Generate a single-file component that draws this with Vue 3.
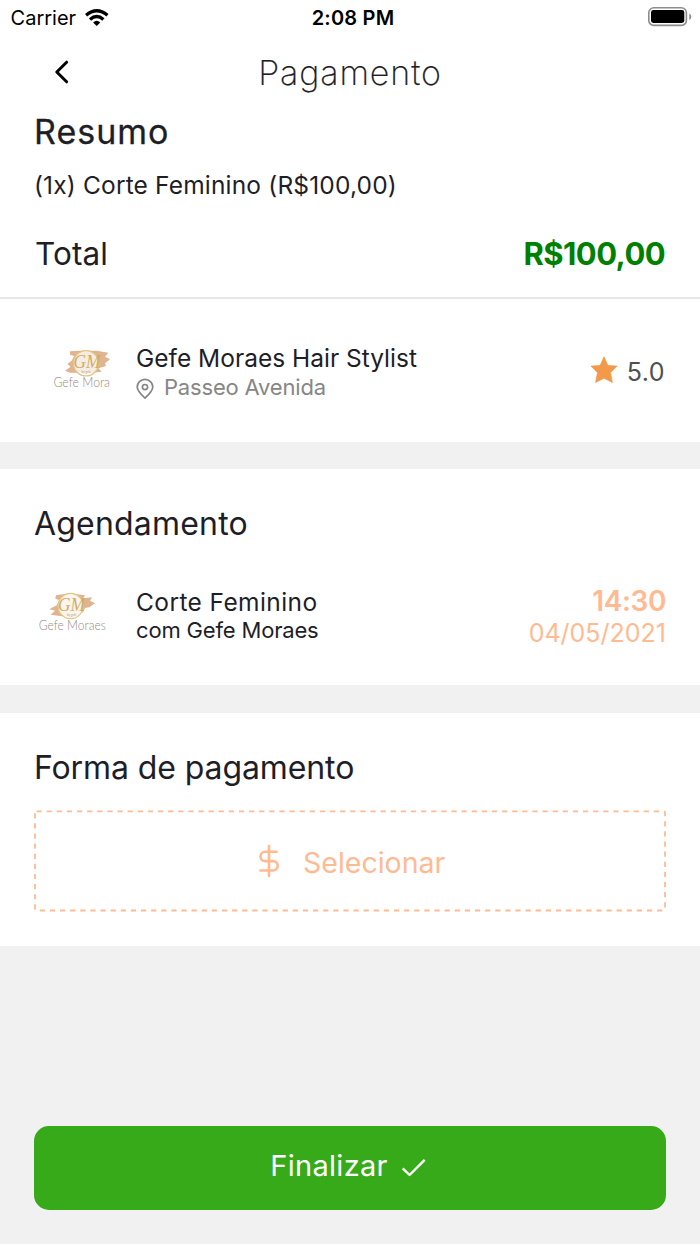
<script setup>
const logos = { salon: 'Gefe Mora', artist: 'Gefe Moraes' }
</script>

<template>
  <main class="screen">
    <div class="status">
      <div class="carrier">
        <span class="carrier-name">Carrier</span>
        <svg class="wifi" width="26" height="20" viewBox="0 0 26 20">
          <g fill="none" stroke="#000" stroke-width="3.3">
            <path d="M2.1 7.2Q12.7-1.7 23.5 7.2" />
            <path d="M6 11.4Q12.7 5.5 19.4 11.4" />
          </g>
          <path d="M9.1 14.4Q12.7 11.2 16.3 14.4L12.7 18Z" />
        </svg>
      </div>
      <span class="clock">2:08 PM</span>
      <svg class="battery" width="46" height="22" viewBox="0 0 46 22">
        <rect x="1.8" y="1.8" width="37.6" height="17.6" rx="5" fill="#fff" stroke="#8c8c8c" stroke-width="1.6" />
        <rect x="4" y="4" width="33.3" height="13" rx="2.4" />
        <path d="M42.3 7.6Q44.3 8.6 44.3 10.8T42.3 14Z" fill="#8c8c8c" />
      </svg>
    </div>

    <header class="header">
      <svg class="back" width="20" height="28" viewBox="0 0 20 28">
        <path d="M14.6 4.2L4.8 14L14.6 23.8" fill="none" stroke="#000" stroke-width="3" stroke-linecap="round" stroke-linejoin="round" />
      </svg>
      <h1 class="title">Pagamento</h1>
    </header>

    <section class="summary">
      <h2 class="heading resumo">Resumo</h2>
      <p class="item">(1x) Corte Feminino (R$100,00)</p>
      <div class="total-row">
        <span class="total">Total</span>
        <strong class="price">R$100,00</strong>
      </div>
    </section>

    <section class="salon">
      <svg class="salon-logo" width="70" height="44" viewBox="0 0 70 44">
        <path d="M20 3.3L30 2.7 46.7 2.7 58.3 4.7 55 8.7 60 11.3 55 15.3 56 18 48.3 20.3 51.7 23.7 43.3 24.7 20 24.7 15 22.7 20.7 18.7 17.3 16 21.7 12.7 24 8 20 6.7Z" fill="#e0b491" />
        <circle cx="36" cy="15.3" r="12.6" fill="#fff" fill-opacity=".75" stroke="#e0c77f" stroke-width="1.2" />
        <text x="23.5" y="20" textLength="27" lengthAdjust="spacingAndGlyphs" class="monogram">GM</text>
        <text x="31.5" y="25" class="tiny">by gefe</text>
        <text x="3.5" y="39" textLength="56.5" lengthAdjust="spacingAndGlyphs" class="logo-text">{{ logos.salon }}</text>
      </svg>
      <div class="info">
        <p class="name">Gefe Moraes Hair Stylist</p>
        <p class="place">
          <svg width="18" height="22" viewBox="0 0 18 22">
            <path d="M9 20.2C5.2 16.8 1.2 13.1 1.2 9.1a7.8 7.8 0 0 1 15.6 0c0 4-4 7.7-7.8 11.1Z" fill="none" stroke="#868686" stroke-width="1.7" stroke-linejoin="round" />
            <circle cx="9" cy="9.1" r="2.6" fill="none" stroke="#868686" stroke-width="1.7" />
          </svg>
          <span>Passeo Avenida</span>
        </p>
      </div>
      <div class="rating">
        <svg width="28" height="28" viewBox="0 0 28 28">
          <path d="M14 .7L17.9 9.5 27 10.1 20.5 16.7 22.4 26.5 14 22.3 5.6 26.5 7.5 16.7 1 10.1 10.1 9.5Z" fill="#f2994a" stroke="#f2994a" stroke-width=".7" stroke-linejoin="round" />
        </svg>
        <span class="score">5.0</span>
      </div>
    </section>

    <section class="booking">
      <h2 class="heading agenda">Agendamento</h2>
      <div class="booking-row">
        <svg class="artist-logo" width="76" height="44" viewBox="0 0 76 44">
          <path d="M22 5.3L36 3.3 51 5.3 49.3 8.3 58 7.3 56 10.7 61 13.3 55.3 17.3 51 18 49.3 22 39 27.3 26 26 16.7 24.7 21 20.7 15.3 19.3 22.7 15.3 25.3 10 21.3 8.7Z" fill="#e0b491" />
          <circle cx="36.6" cy="16" r="12.6" fill="#fff" fill-opacity=".85" stroke="#e0c77f" stroke-width="1.2" />
          <text x="24" y="20.7" textLength="27" lengthAdjust="spacingAndGlyphs" class="monogram">GM</text>
          <text x="33" y="26" class="tiny">by gefe</text>
          <text x="4.8" y="39.8" textLength="67" lengthAdjust="spacingAndGlyphs" class="logo-text">{{ logos.artist }}</text>
        </svg>
        <div class="info">
          <p class="service">Corte Feminino</p>
          <p class="with">com Gefe Moraes</p>
        </div>
        <div class="when">
          <strong class="hour">14:30</strong>
          <span class="date">04/05/2021</span>
        </div>
      </div>
    </section>

    <section class="payment">
      <h2 class="heading forma">Forma de pagamento</h2>
      <div class="select">
        <svg class="frame" width="632" height="102" viewBox="0 0 632 102">
          <rect x="1" y="1.3" width="630" height="99.2" rx="1.5" fill="none" stroke="#ffba92" stroke-width="1.8" stroke-dasharray="5.2 4.92" />
        </svg>
        <svg class="dollar" width="22" height="34" viewBox="0 0 22 34">
          <path d="M11 2V32M18.4 7.7H7.2a4.7 4.7 0 0 0 0 9.4H15a4.7 4.7 0 0 1 0 9.4H2.4" fill="none" stroke="#ffba92" stroke-width="2.6" stroke-linecap="round" stroke-linejoin="round" />
        </svg>
        <span class="select-label">Selecionar</span>
      </div>
    </section>

    <footer class="footer">
      <button class="finish">
        <span class="finish-label">Finalizar</span>
        <svg width="28" height="22" viewBox="0 0 28 22">
          <path d="M2.7 11.3L9.6 18L24.7 2.8" fill="none" stroke="#fff" stroke-width="2.4" stroke-linejoin="round" />
        </svg>
      </button>
    </footer>
  </main>
</template>

<style>
html, body { margin: 0; background: #f1f1f1; }
</style>

<style scoped>
* { box-sizing: border-box; }
.screen {
  width: 700px;
  height: 1244px;
  display: flex;
  flex-direction: column;
  overflow: hidden;
  background: #f1f1f1;
  color: #1e1e27;
  font-family: Inter, "Liberation Sans", sans-serif;
  white-space: nowrap;
}
h1, h2, p { margin: 0; font-weight: 400; }
svg { display: block; flex: none; }
.status {
  display: grid;
  grid-template-columns: 1fr auto 1fr;
  height: 36px;
  align-items: center;
  padding: 0 7px 0 10px;
  background: #fff;
  color: #000;
}
.carrier { display: flex; align-items: center; gap: 8px; padding-left: 0.6px; }
.carrier-name { font-size: 20px; }
.clock { margin-left: 3px; font-size: 20px; font-weight: 600; letter-spacing: 0.2px; }
.battery { justify-self: end; margin-top: -2px; }
.header {
  display: grid;
  grid-template-columns: 100px 500px 100px;
  height: 73px;
  align-items: center;
  background: #fff;
}
.back { margin-left: 52px; margin-top: -2px; }
.title { font-size: 34px; font-weight: 200; text-align: center; line-height: 40px; letter-spacing: 0.9px; -webkit-text-stroke: 0.2px #1e1e27; }
.summary {
  height: 190px;
  padding: 3px 34px 0;
  background: #fff;
  border-bottom: 2px solid #e6e6e6;
}
.heading { font-size: 32px; line-height: 40px; }
.resumo { font-size: 34px; letter-spacing: 1px; -webkit-text-stroke: 0.3px #1e1e27; }
.item { margin-top: 17px; font-size: 24.5px; line-height: 32px; letter-spacing: 0.17px; }
.total-row {
  display: flex;
  justify-content: space-between;
  align-items: center;
  height: 40px;
  margin-top: 32px;
}
.total { padding-left: 1px; font-size: 31.5px; letter-spacing: 0.1px; }
.price { margin-right: 1px; color: #008000; font-size: 31px; font-weight: 700; letter-spacing: -0.6px; }
.salon {
  display: flex;
  height: 143px;
  padding: 2px 35px 0 50px;
  align-items: center;
  background: #fff;
}
.salon-logo { margin-right: 16px; margin-top: -3px; }
.name { font-size: 24.5px; line-height: 30px; }
.place {
  display: flex;
  align-items: center;
  gap: 10px;
  height: 28px;
  color: #868686;
  font-size: 22px;
  letter-spacing: -0.18px;
}
.place svg { margin-top: 4px; }
.rating {
  display: flex;
  align-items: center;
  gap: 9px;
  margin-left: auto;
  color: #4f4f4f;
}
.rating svg { margin-top: -4px; }
.score { font-size: 25px; letter-spacing: 0.5px; }
.booking {
  height: 216px;
  margin-top: 27px;
  padding: 35px 34px 0;
  background: #fff;
}
.agenda { letter-spacing: 0.2px; }
.booking-row { display: flex; align-items: center; height: 62px; margin-top: 41px; }
.artist-logo { margin-right: 26px; margin-top: -8px; }
.booking .info { margin-top: -2px; }
.service { font-size: 24.5px; line-height: 30px; letter-spacing: 0.4px; }
.with { font-size: 22px; line-height: 28px; letter-spacing: -0.17px; margin-top: -1px; }
.when { display: flex; flex-direction: column; align-items: flex-end; margin: 1px 0 0 auto; color: #ffba92; }
.hour { font-size: 28px; font-weight: 600; line-height: 32px; letter-spacing: -0.4px; }
.date { font-size: 25px; line-height: 32px; }
.payment {
  height: 233px;
  margin-top: 28px;
  padding: 35px 34px 0;
  background: #fff;
}
.forma { letter-spacing: -0.1px; }
.select {
  position: relative;
  display: flex;
  align-items: center;
  height: 102px;
  margin-top: 22px;
  padding-left: 224px;
  color: #ffba92;
}
.frame { position: absolute; inset: 0; }
.dollar { margin-right: 23px; }
.select-label { margin-top: 2px; font-size: 28.5px; }
.footer { margin-top: auto; padding: 0 34px 34px; }
.finish {
  display: flex;
  width: 632px;
  height: 84px;
  padding: 0 2px 2px 0;
  align-items: center;
  justify-content: center;
  gap: 12px;
  border: 0;
  border-radius: 15px;
  background: #36aa18;
  color: #fff;
  font: 400 29px Inter, sans-serif;
}
.finish-label { margin-top: -3px; letter-spacing: 0.3px; }
.finish svg { margin-top: 2px; }
.logo-text { font-family: Lato, sans-serif; font-weight: 300; font-size: 13px; fill: #958b85; }
.monogram { font-family: "Liberation Serif", serif; font-style: italic; font-size: 18px; fill: #cfae62; }
.tiny { font-family: Lato, sans-serif; font-size: 3px; fill: #b09a80; }
</style>
